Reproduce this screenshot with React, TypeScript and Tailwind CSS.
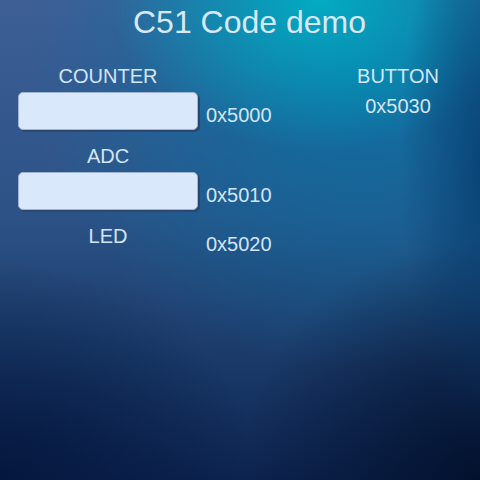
const font = { fontFamily: '"Liberation Sans", Arial, sans-serif' };

function Field() {
  return (
    <div className="ml-[18px] h-[38px] w-[180px] rounded-[5px] border border-[#9db4d6] bg-[#dae8fb] shadow-[2px_2px_0_#2c4670]" />
  );
}

function Address({ value }: { value: string }) {
  return <div className="ml-2 text-[20px] leading-6 text-[#d3e5f7]">{value}</div>;
}

function Label({ text }: { text: string }) {
  return <div className="w-[216px] text-center text-[20px] leading-6 text-[#d3e5f7]">{text}</div>;
}

export default function App() {
  return (
    <div
      style={font}
      className="h-[480px] w-[480px] overflow-hidden bg-[radial-gradient(ellipse_90px_280px_at_490px_160px,rgba(0,55,105,0.75),rgba(0,55,105,0)),radial-gradient(ellipse_210px_150px_at_320px_0px,rgba(0,178,198,0.9),rgba(0,178,198,0)),radial-gradient(ellipse_240px_240px_at_480px_480px,rgba(0,14,40,0.85),rgba(0,14,40,0)),radial-gradient(ellipse_260px_220px_at_0px_480px,rgba(2,20,58,0.8),rgba(2,20,58,0)),radial-gradient(ellipse_330px_300px_at_360px_70px,rgba(0,118,168,0.8),rgba(0,118,168,0)),linear-gradient(180deg,#3d5f96_0%,#2c5286_45%,#1a3a69_75%,#0d2450_100%)]"
    >
      <h1 className="pl-[19px] pt-[2px] text-center text-[32px] font-normal leading-[40px] text-[#d8e8f8]">
        C51 Code demo
      </h1>

      <div className="mt-[22px] flex">
        <div className="flex w-[338px] flex-col">
          <Label text="COUNTER" />
          <div className="mt-1 flex items-end">
            <Field />
            <div className="mb-[3px]">
              <Address value="0x5000" />
            </div>
          </div>

          <div className="mt-[14px]">
            <Label text="ADC" />
          </div>
          <div className="mt-1 flex items-end">
            <Field />
            <div className="mb-[3px]">
              <Address value="0x5010" />
            </div>
          </div>

          <div className="mt-[14px] flex items-start">
            <Label text="LED" />
            <div className="-ml-[18px] mt-2">
              <Address value="0x5020" />
            </div>
          </div>
        </div>

        <div className="flex w-[120px] flex-col items-center text-[20px] leading-6 text-[#d3e5f7]">
          <div>BUTTON</div>
          <div className="mt-[6px]">0x5030</div>
        </div>
      </div>
    </div>
  );
}
